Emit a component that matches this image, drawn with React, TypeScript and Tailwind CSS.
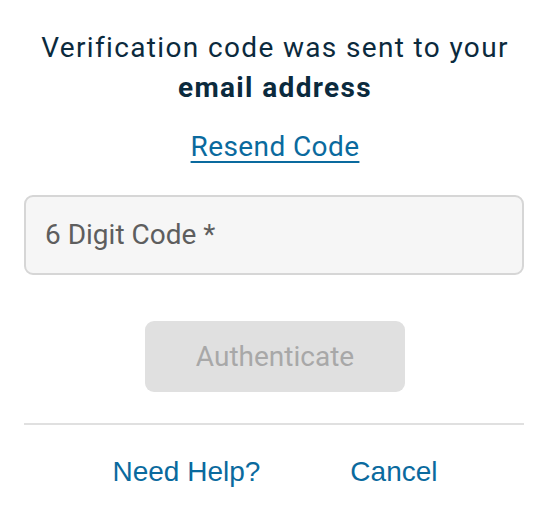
import React from "react";

export default function App() {
  return (
    <div className="w-[550px] h-[518px] bg-white px-6 pt-7 flex flex-col items-center">
      <h1 className="text-center text-[28px] leading-[40px] tracking-[1.35px] text-[#0b2a3d] font-normal [font-family:Roboto,sans-serif]">
        Verification code was sent to your
        <br />
        <span className="font-bold">email address</span>
      </h1>
      <a
        href="#"
        className="mt-[19px] text-[28px] leading-[40px] tracking-[0.4px] text-[#0a6a9e] underline underline-offset-[5px] decoration-2 [font-family:Roboto,sans-serif]"
      >
        Resend Code
      </a>
      <div className="self-start mt-[28px] w-[500px] h-[80px] rounded-[9px] border-2 border-[#d6d6d6] bg-[#f6f6f6] flex items-center px-[19px]">
        <input
          className="w-full bg-transparent outline-none text-[28px] text-[#333] placeholder:text-[#5e5e5e] [font-family:Roboto,sans-serif]"
          placeholder="6 Digit Code *"
        />
      </div>
      <button
        disabled
        className="mt-[46px] w-[260px] h-[71px] rounded-[9px] bg-[#e0e0e0] text-[#a8a8a8] text-[28px] [font-family:Roboto,sans-serif]"
      >
        Authenticate
      </button>
      <div className="self-start mt-[31px] w-[500px] h-[2px] bg-[#e0e0e0]" />
      <div className="mt-[27px] flex gap-[90px] text-[28px] leading-[40px] text-[#0a6a9e] [font-family:'Liberation_Sans',Arial,sans-serif]">
        <a href="#">Need Help?</a>
        <a href="#">Cancel</a>
      </div>
    </div>
  );
}
